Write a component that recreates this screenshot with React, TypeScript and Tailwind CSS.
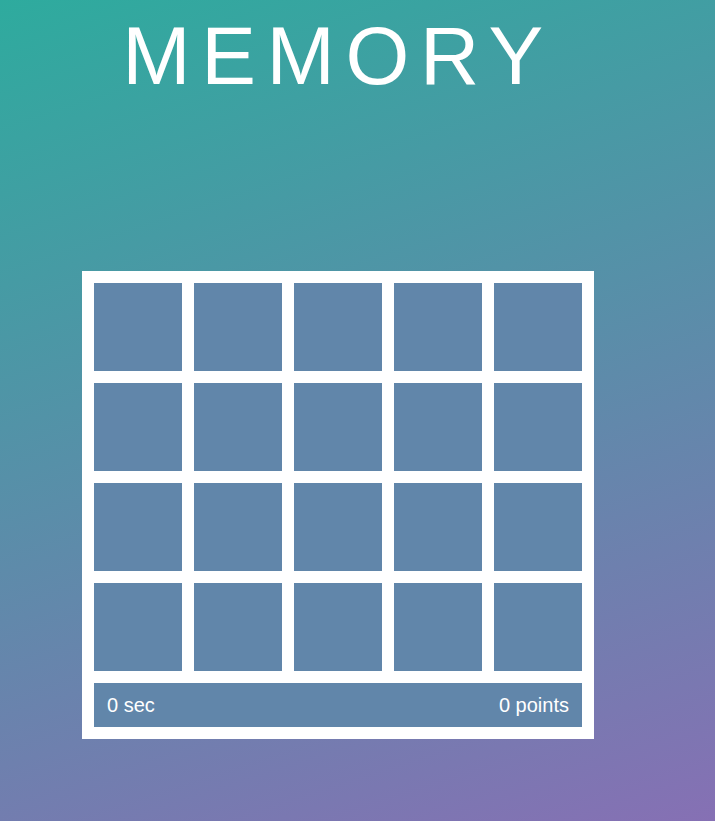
const CELLS = Array.from({ length: 20 }, (_, i) => i);

export default function App() {
  return (
    <div
      className="min-h-screen w-full bg-[linear-gradient(162deg,#2eab9e,#8670b4)]"
      style={{ fontFamily: '"Liberation Sans", Arial, sans-serif' }}
    >
      <div className="ml-[82px] w-[512px] pt-[15px]">
        <h1 className="text-center text-[82px] leading-none font-normal tracking-[0.13em] text-white">
          MEMORY
        </h1>

        <div className="mt-[174px] bg-white p-[12px]">
          <div className="grid grid-cols-5 gap-[12px]">
            {CELLS.map((i) => (
              <div key={i} className="h-[88px] w-[88px] bg-[#6186aa]" />
            ))}
          </div>
          <div className="mt-[12px] flex h-[44px] items-center justify-between bg-[#6186aa] px-[13px] text-[20px] text-white">
            <span>0 sec</span>
            <span>0 points</span>
          </div>
        </div>
      </div>
    </div>
  );
}
